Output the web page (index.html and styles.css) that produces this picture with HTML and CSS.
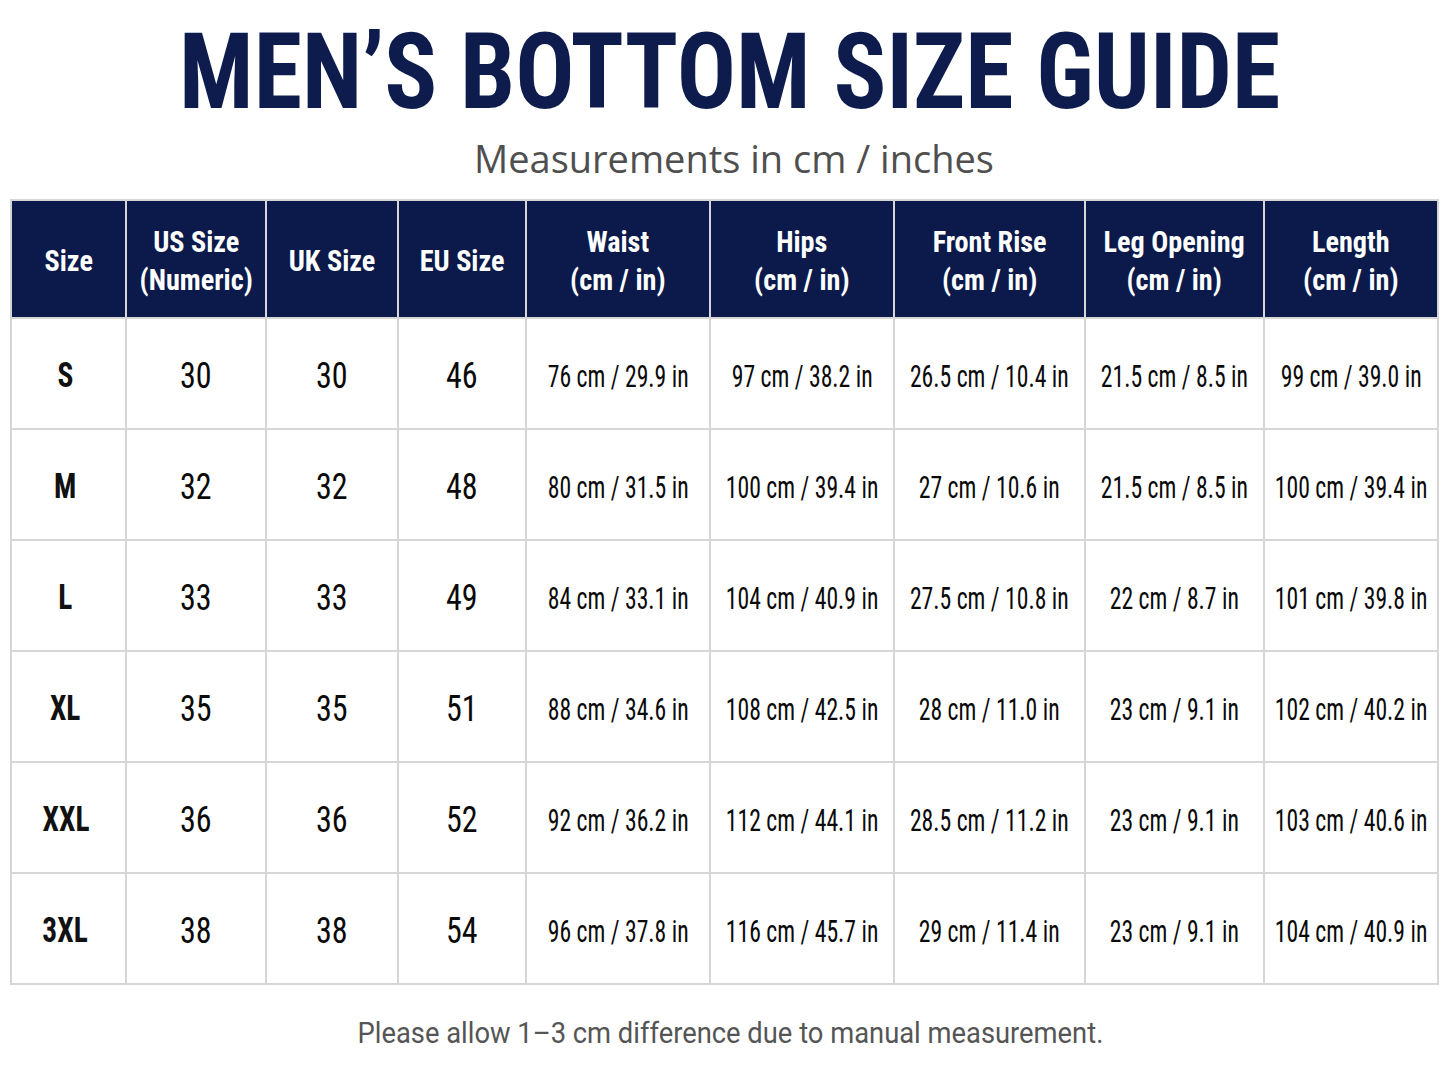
FILE: index.html
```html
<!DOCTYPE html>
<html lang="en">
<head>
<meta charset="utf-8">
<title>Men's Bottom Size Guide</title>
<link rel="stylesheet" href="styles.css">
</head>
<body>
<main class="page">
  <header class="heading">
    <h1 class="title"><span class="title-text">MEN’S BOTTOM SIZE GUIDE</span></h1>
    <p class="subtitle">Measurements in cm / inches</p>
  </header>

  <table class="guide">
    <colgroup>
      <col class="c-size"><col class="c-us"><col class="c-uk"><col class="c-eu">
      <col class="c-waist"><col class="c-hips"><col class="c-rise"><col class="c-leg"><col class="c-length">
    </colgroup>
    <thead>
      <tr>
        <th><span class="h">Size</span></th>
        <th><span class="h">US Size<br>(Numeric)</span></th>
        <th><span class="h">UK Size</span></th>
        <th><span class="h">EU Size</span></th>
        <th><span class="h">Waist<br>(cm / in)</span></th>
        <th><span class="h">Hips<br>(cm / in)</span></th>
        <th><span class="h">Front Rise<br>(cm / in)</span></th>
        <th><span class="h">Leg Opening<br>(cm / in)</span></th>
        <th><span class="h">Length<br>(cm / in)</span></th>
      </tr>
    </thead>
    <tbody>
      <tr>
        <td><span class="sz">S</span></td>
        <td><span class="num">30</span></td><td><span class="num">30</span></td><td><span class="num">46</span></td>
        <td><span class="m">76 cm / 29.9 in</span></td><td><span class="m">97 cm / 38.2 in</span></td>
        <td><span class="m">26.5 cm / 10.4 in</span></td><td><span class="m">21.5 cm / 8.5 in</span></td>
        <td><span class="m">99 cm / 39.0 in</span></td>
      </tr>
      <tr>
        <td><span class="sz">M</span></td>
        <td><span class="num">32</span></td><td><span class="num">32</span></td><td><span class="num">48</span></td>
        <td><span class="m">80 cm / 31.5 in</span></td><td><span class="m">100 cm / 39.4 in</span></td>
        <td><span class="m">27 cm / 10.6 in</span></td><td><span class="m">21.5 cm / 8.5 in</span></td>
        <td><span class="m">100 cm / 39.4 in</span></td>
      </tr>
      <tr>
        <td><span class="sz">L</span></td>
        <td><span class="num">33</span></td><td><span class="num">33</span></td><td><span class="num">49</span></td>
        <td><span class="m">84 cm / 33.1 in</span></td><td><span class="m">104 cm / 40.9 in</span></td>
        <td><span class="m">27.5 cm / 10.8 in</span></td><td><span class="m">22 cm / 8.7 in</span></td>
        <td><span class="m">101 cm / 39.8 in</span></td>
      </tr>
      <tr>
        <td><span class="sz">XL</span></td>
        <td><span class="num">35</span></td><td><span class="num">35</span></td><td><span class="num">51</span></td>
        <td><span class="m">88 cm / 34.6 in</span></td><td><span class="m">108 cm / 42.5 in</span></td>
        <td><span class="m">28 cm / 11.0 in</span></td><td><span class="m">23 cm / 9.1 in</span></td>
        <td><span class="m">102 cm / 40.2 in</span></td>
      </tr>
      <tr>
        <td><span class="sz">XXL</span></td>
        <td><span class="num">36</span></td><td><span class="num">36</span></td><td><span class="num">52</span></td>
        <td><span class="m">92 cm / 36.2 in</span></td><td><span class="m">112 cm / 44.1 in</span></td>
        <td><span class="m">28.5 cm / 11.2 in</span></td><td><span class="m">23 cm / 9.1 in</span></td>
        <td><span class="m">103 cm / 40.6 in</span></td>
      </tr>
      <tr>
        <td><span class="sz">3XL</span></td>
        <td><span class="num">38</span></td><td><span class="num">38</span></td><td><span class="num">54</span></td>
        <td><span class="m">96 cm / 37.8 in</span></td><td><span class="m">116 cm / 45.7 in</span></td>
        <td><span class="m">29 cm / 11.4 in</span></td><td><span class="m">23 cm / 9.1 in</span></td>
        <td><span class="m">104 cm / 40.9 in</span></td>
      </tr>
    </tbody>
  </table>

  <p class="note"><span class="note-text">Please allow 1–3 cm difference due to manual measurement.</span></p>
</main>
</body>
</html>
```
FILE: styles.css
```css
html, body {
  margin: 0;
  padding: 0;
  background: #ffffff;
}

.page {
  width: 1448px;
  display: flex;
  flex-direction: column;
  align-items: flex-start;
}

.heading {
  width: 100%;
  box-sizing: border-box;
  padding-left: 12px;
  display: flex;
  flex-direction: column;
  align-items: center;
}

.title {
  margin: 20px 0 0;
  font-family: "Roboto Condensed", "Roboto", "Liberation Sans", sans-serif;
  font-weight: 700;
  font-size: 105px;
  line-height: 105px;
  color: #0d1c4d;
  white-space: nowrap;
  text-align: center;
}

.title-text {
  display: inline-block;
  transform: scaleX(0.937);
  transform-origin: center;
}

.subtitle {
  margin: 14px 0 0;
  padding-left: 8px;
  font-family: "Open Sans", "Noto Sans", sans-serif;
  font-weight: 400;
  font-size: 38px;
  line-height: 38px;
  color: #4f4f4f;
  text-align: center;
}

.guide {
  margin: 22px 0 0 10px;
  width: 1427px;
  table-layout: fixed;
  border-collapse: collapse;
  font-family: "Roboto Condensed", "Roboto", "Liberation Sans", sans-serif;
  color: #0a0a0a;
}

.c-size { width: 115px; }
.c-us { width: 140px; }
.c-uk { width: 132px; }
.c-eu { width: 128px; }
.c-waist { width: 184px; }
.c-hips { width: 184px; }
.c-rise { width: 191px; }
.c-leg { width: 179px; }
.c-length { width: 174px; }

.guide th,
.guide td {
  border: 2px solid #d6d6d6;
  padding: 0;
  text-align: center;
  vertical-align: middle;
  white-space: nowrap;
}

.guide th {
  height: 116px;
  background: #0b1a4a;
  color: #ffffff;
  font-weight: 700;
  font-size: 30px;
  line-height: 38px;
}

.guide td {
  height: 109px;
  background: #ffffff;
}

.h {
  display: inline-block;
  transform: scaleX(0.94);
  padding-top: 3px;
}

.sz {
  display: inline-block;
  font-weight: 700;
  font-size: 35px;
  transform: scaleX(0.84);
  padding-top: 4px;
  margin-right: 6px;
  color: #111111;
}

.num {
  display: inline-block;
  font-weight: 400;
  font-size: 36px;
  transform: scaleX(0.89);
  padding-top: 4px;
}

.m {
  display: inline-block;
  font-weight: 400;
  font-size: 32px;
  transform: scaleX(0.74);
  padding-top: 4px;
  margin: 0 -40px;
}

.note {
  margin: 34px 0 0;
  width: 100%;
  box-sizing: border-box;
  padding-left: 12px;
  text-align: center;
  font-family: "Roboto", "Liberation Sans", sans-serif;
  font-size: 29px;
  line-height: 29px;
  color: #555555;
}

.note-text {
  display: inline-block;
  transform: scaleX(0.943);
}
```
